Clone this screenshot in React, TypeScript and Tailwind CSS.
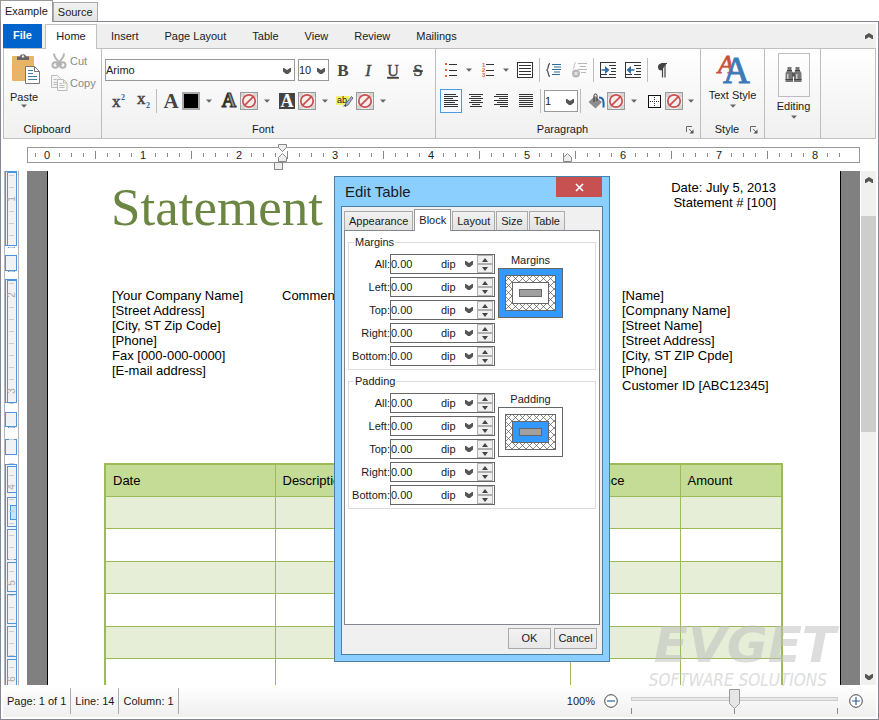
import React from "react";

const SANS = "font-['Liberation_Sans',Arial,sans-serif]";
const SERIF = "'Liberation Serif', 'Times New Roman', serif";

function Caret({ w = "w-[18px]" }: { w?: string }) {
  return (
    <button aria-label="More" className={`${w} flex h-[22px] shrink-0 items-center justify-center`}>
      <svg width="6" height="4" viewBox="0 0 6 4"><path d="M0 0.5h6L3 3.7z" fill="#666" /></svg>
    </button>
  );
}

function Chevron({ up = false, className = "" }: { up?: boolean; className?: string }) {
  return (
    <svg width="10" height="6" viewBox="0 0 10 6" className={className}>
      {up ? (
        <path d="M5 0L9 2.500V6H8L5 4 2 6H1V2.500z" fill="#555" />
      ) : (
        <path d="M1 0h1l3 2 3-2h1v3.500L6 6H4L1 3.500z" fill="#555" />
      )}
    </svg>
  );
}

function Tool({ label, w = "w-[25px]", children }: { label: string; w?: string; children: React.ReactNode }) {
  return (
    <button aria-label={label} className={`${w} flex h-6 shrink-0 items-center justify-center`}>
      {children}
    </button>
  );
}

function Sep() {
  return <div className="ml-[2px] mr-px h-6 w-px shrink-0 bg-[#bdbdbd]" />;
}

function Picker({ label, value, w }: { label: string; value: string; w: string }) {
  return (
    <div className={`${w} relative h-[22px] shrink-0 border border-[#999] bg-white`}>
      <select aria-label={label} defaultValue={value} className="h-full w-full appearance-none bg-transparent text-[11px] text-[#222] outline-none">
        <option>{value}</option>
      </select>
      <Chevron className="pointer-events-none absolute right-[2px] top-[8px]" />
    </div>
  );
}

function NoColor({ label }: { label: string }) {
  return (
    <button aria-label={label} className="flex size-[18px] shrink-0 items-center justify-center border border-[#9a9a9a] bg-[#eeeeee]">
      <svg width="16" height="16" viewBox="0 0 16 16">
        <path d="M0 0h4v4H0zM12 0h4v4h-4zM0 12h4v4H0zM12 12h4v4h-4z" fill="#d6d6d6" />
        <circle cx="8" cy="8" r="6.2" fill="#f8eeee" stroke="#c9504e" strokeWidth="1.7" />
        <path d="M3.8 12.2l8.4-8.4" stroke="#c9504e" strokeWidth="1.7" />
      </svg>
    </button>
  );
}

function Glyph({ children, size = 17, ...rest }: { children: React.ReactNode; size?: number } & React.SVGProps<SVGTextElement>) {
  return (
    <svg width="22" height="24" viewBox="0 0 22 24" className="overflow-visible">
      <text x="11" y="18" textAnchor="middle" fontFamily={SERIF} fontSize={size} fill="#444" {...rest}>{children}</text>
    </svg>
  );
}

function Lines({ rows }: { rows: number[][] }) {
  return (
    <svg width="16" height="16" viewBox="0 0 16 16">
      {rows.map(([x, w], i) => <rect key={i} x={x} y={1 + i * 2} width={w} height="1" fill="#333" />)}
    </svg>
  );
}

function Indent({ out = false }: { out?: boolean }) {
  return (
    <svg width="16" height="16" viewBox="0 0 16 16">
      <path d="M0 .5h16M0 15.5h16M9 3.5h7M11 6.5h5M11 9.5h5M9 12.5h7M0 12.5h7M0.500 .5v15" stroke="#333" />
      {out ? (
        <path d="M9.5 7.2H6V4L1.5 8 6 12V8.8h3.5z" fill="#2e6aa8" />
      ) : (
        <path d="M1.5 7.2H5V4l4.5 4L5 12V8.8H1.5z" fill="#2e6aa8" />
      )}
    </svg>
  );
}

function Launcher() {
  return (
    <button aria-label="Open settings" className="absolute bottom-[4px] right-[6px]">
      <svg width="8" height="8" viewBox="0 0 8 8">
        <path d="M.5 6V.5H6M3 3l3.5 3.5" stroke="#666" fill="none" />
        <path d="M7.5 3.5v4h-4z" fill="#555" />
      </svg>
    </button>
  );
}

function GroupLabel({ children }: { children: React.ReactNode }) {
  return <div className="absolute inset-x-0 bottom-[2px] pr-[11px] text-center leading-[13px]">{children}</div>;
}

function Ribbon() {
  return (
    <div className="relative flex h-[91px] shrink-0 border border-[#c0c0c0] bg-gradient-to-b from-white to-[#f0f0f0]">
      <section className="relative w-[98px] shrink-0 border-r border-[#bdbdbd]">
        <div className="flex">
          <button className="flex w-[40px] flex-col items-center pt-[4px]">
            <svg width="30" height="32" viewBox="0 0 30 32" className="ml-1">
              <rect x="1" y="3" width="22" height="25" rx="1" fill="#e8b468" />
              <path d="M6 7V3.5h3C9 .5 15 .5 15 3.5h3V7z" fill="#666" />
              <circle cx="12" cy="3.4" r="1.2" fill="#eee" />
              <path d="M14.5 13.5h9l5 5v12h-14z" fill="#fff" stroke="#777" />
              <path d="M23.5 13.5v5h5" fill="none" stroke="#777" />
              <path d="M17 17.5h5M17 20.5h5M17 23.5h9M17 26.5h9" stroke="#3f7f9f" />
            </svg>
            <span className="mt-[5px] leading-[14px] text-[#222]">Paste</span>
            <svg width="6" height="4" viewBox="0 0 6 4"><path d="M0 0.5h6L3 3.7z" fill="#666" /></svg>
          </button>
          <div className="flex flex-col pt-[1px] pl-[7px] text-[#8a8a8a]">
            <button className="flex h-[22px] items-center gap-[2px]">
              <svg width="17" height="16" viewBox="0 0 17 16">
                <path d="M3 .5C3 4 5 7 11 12M13 .5C13 4 11 7 5 12" fill="none" stroke="#b4b4b4" strokeWidth="2" />
                <circle cx="4.3" cy="12" r="2.8" fill="none" stroke="#b4b4b4" strokeWidth="2" />
                <circle cx="11.7" cy="12" r="2.8" fill="none" stroke="#b4b4b4" strokeWidth="2" />
              </svg>
              Cut
            </button>
            <button className="flex h-[22px] items-center gap-[2px]">
              <svg width="17" height="16" viewBox="0 0 17 16">
                <path d="M.5.5h6l3 3v9h-9z" fill="#f4f4f4" stroke="#bbb" />
                <path d="M2.500 4.500h3M2.500 7.500h4M2.500 9.500h4" stroke="#bbb" />
                <path d="M6.500 4.500h6l3.500 3.500v7.500h-9.500z" fill="#f8f8f8" stroke="#bbb" />
                <path d="M12.500 4.500v3.500h3.500M8.500 8.500h3M8.500 10.500h5M8.500 12.500h5" fill="none" stroke="#bbb" />
              </svg>
              Copy
            </button>
          </div>
        </div>
        <GroupLabel>Clipboard</GroupLabel>
      </section>

      <section className="relative w-[334px] shrink-0 border-r border-[#bdbdbd] pl-[3px] pt-[9px]">
        <div className="flex h-[24px] items-center">
          <Picker label="Font family" value="Arimo" w="w-[190px]" />
          <div className="w-[3px]" />
          <Picker label="Font size" value="10" w="w-[31px]" />
          <div className="flex pl-px">
            <Tool label="Bold"><Glyph fontWeight="bold">B</Glyph></Tool>
            <Tool label="Italic"><Glyph fontStyle="italic" stroke="#444" strokeWidth=".4">I</Glyph></Tool>
            <Tool label="Underline"><Glyph size={16} stroke="#444" strokeWidth=".4" textDecoration="underline">U</Glyph></Tool>
            <Tool label="Strikethrough"><Glyph textDecoration="line-through" stroke="#444" strokeWidth=".4">S</Glyph></Tool>
          </div>
        </div>
        <div className="mt-[7px] flex h-[24px] items-center">
          <Tool label="Superscript">
            <svg width="22" height="22" viewBox="0 0 22 22">
              <text x="5" y="17" fontFamily={SERIF} fontSize="17" fill="#444" stroke="#444" strokeWidth=".5">x</text>
              <text x="14" y="10" fontFamily={SERIF} fontSize="8" fontWeight="bold" fill="#1f63ac">2</text>
            </svg>
          </Tool>
          <Tool label="Subscript">
            <svg width="22" height="22" viewBox="0 0 22 22">
              <text x="5" y="14" fontFamily={SERIF} fontSize="17" fill="#444" stroke="#444" strokeWidth=".5">x</text>
              <text x="14" y="18" fontFamily={SERIF} fontSize="8" fontWeight="bold" fill="#1f63ac">2</text>
            </svg>
          </Tool>
          <div className="ml-px mr-[3px] h-6 w-px bg-[#bdbdbd]" />
          <Tool label="Text colour" w="w-[22px]"><Glyph size={21} fontWeight="bold" y="19">A</Glyph></Tool>
          <button aria-label="Black" className="size-[18px] shrink-0 border-2 border-[#aaa] bg-black" />
          <Caret />
          <Tool label="Outline colour" w="w-[22px]">
            <Glyph size={20} fontWeight="bold" y="18" style={{ fill: "#999" }} stroke="#333" strokeWidth="1.2">A</Glyph>
          </Tool>
          <NoColor label="No outline" />
          <Caret />
          <Tool label="Text background" w="w-[22px]">
            <svg width="16" height="16" viewBox="0 0 16 16" className="overflow-visible">
              <rect width="16" height="16" fill="#444" />
              <text x="8" y="14" textAnchor="middle" fontFamily={SERIF} fontSize="18" fontWeight="bold" fill="#fff">A</text>
            </svg>
          </Tool>
          <NoColor label="No text background" />
          <Caret />
          <Tool label="Highlight" w="w-[22px]">
            <svg width="18" height="14" viewBox="0 0 18 14">
              <rect x="0" y="2" width="13" height="9" fill="#f2f06a" />
              <text x="1" y="9" fontFamily="Liberation Sans, sans-serif" fontSize="9" fill="#222">ab</text>
              <path d="M15.500 2.500l1.500 1.500-5 7-3 1.500.8-3z" fill="#9bbbe0" stroke="#456" strokeWidth=".8" />
              <path d="M6.500 12.500l3-2 1 1z" fill="#333" />
            </svg>
          </Tool>
          <NoColor label="No highlight" />
          <Caret />
        </div>
        <GroupLabel>Font</GroupLabel>
      </section>

      <section className="relative w-[265px] shrink-0 border-r border-[#bdbdbd] pl-[2px] pt-[9px]">
        <div className="flex h-[24px] items-center">
          <Tool label="Bullets">
            <svg width="14" height="14" viewBox="0 0 14 14">
              <path d="M1 0h2v2H1zM1 6h2v2H1zM1 12h2v2H1z" fill="#d9683c" />
              <path d="M5 1.500h8M5 7.500h8M5 12.500h8" stroke="#333" />
            </svg>
          </Tool>
          <Caret w="w-[12px]" />
          <Tool label="Numbering">
            <svg width="14" height="16" viewBox="0 0 14 16">
              {["1", "2", "3"].map((n, i) => (
                <text key={n} x="1" y={5 + i * 5} fontFamily="Liberation Sans, sans-serif" fontSize="6" fontWeight="bold" fill="#d9683c">{n}</text>
              ))}
              <path d="M5 2.500h8M5 8.500h8M5 13.500h8" stroke="#333" />
            </svg>
          </Tool>
          <Caret w="w-[12px]" />
          <Tool label="Paragraph">
            <svg width="16" height="16" viewBox="0 0 16 16">
              <rect x=".5" y=".5" width="15" height="15" fill="#fff" stroke="#333" />
              <path d="M2 3.500h12M2 6.500h12M2 9.500h12M2 12.500h12" stroke="#333" />
            </svg>
          </Tool>
          <Sep />
          <Tool label="Add style">
            <svg width="15" height="14" viewBox="0 0 15 14">
              <path d="M4 .5C1.500.5 3 6 .8 7 3 8 1.500 13.500 4 13.500" fill="none" stroke="#555" strokeWidth="1.300" />
              <path d="M6 1.500h9M6 6.500h9M6 11.500h8M8 4h7M8 9h6" stroke="#2e6a9a" />
            </svg>
          </Tool>
          <Tool label="Remove style">
            <svg width="16" height="16" viewBox="0 0 16 16">
              <path d="M5 .5C2.500.5 4 6 1.800 7M7 1.500h9M9 4.500h6M7 7.500h9M10 10.500h5" fill="none" stroke="#b8b8b8" />
              <circle cx="5" cy="11.500" r="4" fill="#b8b8b8" />
              <path d="M3.500 10l3 3M6.500 10l-3 3" stroke="#fff" />
            </svg>
          </Tool>
          <Sep />
          <Tool label="Increase indent"><Indent /></Tool>
          <Tool label="Decrease indent"><Indent out /></Tool>
          <Sep />
          <Tool label="Formatting marks">
            <svg width="10" height="15" viewBox="0 0 10 15">
              <path d="M9.500.5H4.500a3.500 3.500 0 000 7" fill="#444" />
              <path d="M4 .5h6M5.500.5v14M8 .5v14" stroke="#444" strokeWidth="1.200" />
            </svg>
          </Tool>
        </div>
        <div className="mt-[7px] flex h-[24px] items-center">
          <button aria-label="Align left" className="ml-[2px] mr-px flex h-6 w-[22px] items-center justify-center border border-[#4a9be0] bg-[#f4faff]">
            <Lines rows={[[1, 12], [1, 14], [1, 9], [1, 14], [1, 11], [1, 14], [1, 14]]} />
          </button>
          <Tool label="Align centre"><Lines rows={[[1, 14], [3, 10], [1, 14], [3, 10], [1, 14], [4, 8], [2, 12]]} /></Tool>
          <Tool label="Align right"><Lines rows={[[3, 12], [1, 14], [6, 9], [1, 14], [4, 11], [1, 14], [7, 8]]} /></Tool>
          <Tool label="Justify"><Lines rows={[[1, 14], [1, 14], [1, 14], [1, 14], [1, 14], [1, 14], [1, 14]]} /></Tool>
          <Sep />
          <div className="w-[2px] shrink-0" />
          <Picker label="Line spacing" value="1" w="w-[34px]" />
          <Sep />
          <Tool label="Fill">
            <svg width="17" height="17" viewBox="0 0 17 17" className="ml-[4px]">
              <path d="M7 3l7 6-6.500 6.500L.5 9z" fill="#8c8c8c" />
              <path d="M6 9V2.500a1.500 1.500 0 013 0V8" fill="none" stroke="#333" />
              <path d="M11 4.500c4 0 5 2 4.500 10" fill="none" stroke="#1f63ac" strokeWidth="2" />
            </svg>
          </Tool>
          <NoColor label="No fill" />
          <Caret />
          <Tool label="Borders" w="w-[22px]">
            <svg width="13" height="13" viewBox="0 0 13 13">
              <rect x=".5" y=".5" width="12" height="12" fill="#fff" stroke="#111" />
              <path d="M6.500 2v10M2 6.500h10" stroke="#333" strokeDasharray="1 1" />
            </svg>
          </Tool>
          <NoColor label="No border" />
          <Caret w="w-[16px]" />
        </div>
        <GroupLabel>Paragraph</GroupLabel>
        <Launcher />
      </section>

      <section className="relative w-[64px] shrink-0 border-r border-[#bdbdbd]">
        <button className="flex w-full flex-col items-center pt-[4px]">
          <svg width="32" height="32" viewBox="0 0 32 32" className="overflow-visible">
            <text x="1" y="20" fontFamily={SERIF} fontSize="26" fontStyle="italic" fill="#c9503c" stroke="#c9503c" strokeWidth=".8">A</text>
            <text x="6" y="30" fontFamily={SERIF} fontSize="37" fill="#3d7ab8" stroke="#3d7ab8" strokeWidth="1">A</text>
          </svg>
          <span className="mt-[3px] whitespace-nowrap leading-[14px]">Text Style</span>
          <svg width="6" height="4" viewBox="0 0 6 4" className="mt-[2px]"><path d="M0 0.5h6L3 3.7z" fill="#666" /></svg>
        </button>
        <GroupLabel>Style</GroupLabel>
        <Launcher />
      </section>

      <section className="w-[56px] shrink-0 border-r border-[#bdbdbd] pl-[2px]">
        <button className="flex w-full flex-col items-center pt-[4px]">
          <span className="flex h-[44px] w-[32px] items-center justify-center border border-[#bdbdbd]">
            <svg width="17" height="16" viewBox="0 0 17 16">
              <path d="M2.500 0h4v3L8 6v9H.5V6L2.500 3zM10.500 0h4v3l2 3v9H9V6l1.500-3z" fill="#777" />
              <path d="M7 5.500h3v4H7z" fill="#555" />
              <path d="M2 7h1.500v6H2zM11 7h1.500v6H11z" fill="#ccc" />
              <path d="M.5 12.500H8M9 12.500h7.500M2 3.500h5M10 3.500h5" stroke="#444" />
            </svg>
          </span>
          <span className="mt-[2px] leading-[14px]">Editing</span>
          <svg width="6" height="4" viewBox="0 0 6 4" className="mt-[2px]"><path d="M0 0.5h6L3 3.7z" fill="#666" /></svg>
        </button>
      </section>
    </div>
  );
}

function HorizontalRuler() {
  const ticks = Array.from({ length: 68 }, (_, i) => i - 1).filter((i) => i % 8 !== 0);
  return (
    <div className="relative ml-6 mr-4 mt-[8px] h-[24px] shrink-0">
      <div className="h-[16px] border border-[#999]" />
      <svg className="absolute left-0 top-[-4px] h-[28px] w-full" aria-label="Ruler">
        {ticks.map((i) => (
          <path key={i} d={i % 4 === 0 ? `M${20.5 + i * 12} 8v8` : `M${20.5 + i * 12} 10v4`} stroke="#888" />
        ))}
        {Array.from({ length: 9 }, (_, n) => (
          <text key={n} x={20 + n * 96} y="16" textAnchor="middle" fontSize="11" fill="#222">{n}</text>
        ))}
        <g fill="#eee" stroke="#888">
          <path d="M251.500 1.500h8v3l-4 4-4-4z" />
          <path d="M255.500 10.500l4 4v4h-8v-4z" />
          <rect x="247.500" y="19.500" width="8" height="7" />
          <path d="M540.500 10.500l4 4v4h-8v-4z" />
        </g>
      </svg>
    </div>
  );
}

const rulerBoxes = [
  [2, 0, 75], [4, 1, 74], [2, 84, 16], [2, 108, 124], [4, 109, 123], [2, 241, 15], [2, 268, 16],
  [2, 293, 230], [4, 295, 27], [4, 326, 30], [4, 358, 31], [4, 391, 30], [4, 423, 30], [4, 455, 31], [4, 488, 30],
];

function VerticalRuler() {
  return (
    <svg className="h-full w-6 shrink-0" aria-label="Vertical ruler">
      <path d="M1.500 0v520M15.500 0v520" stroke="#b9b4bb" />
      <g fill="#f2f2f2" stroke="#4a97de">
        {rulerBoxes.map(([x, y, h], i) => <rect key={i} x={x + 0.5} y={y + 0.5} width={13 - x} height={h - 1} />)}
        <rect x="7.500" y="334.500" width="6" height="14" fill="#c5e3fb" />
        <path d="M5 76.500h7M5 100.500h7M5 256.500h7" />
      </g>
      {Array.from({ length: 42 }, (_, i) => i)
        .filter((i) => i % 8 !== 2 && i !== 7 && i !== 20 && i !== 23)
        .map((i) => <path key={i} d={`M6 ${4.5 + i * 12}h5`} stroke="#ccc" />)}
      {[1, 2, 3, 4, 5, 6].map((n) => (
        <text key={n} transform={`translate(12 ${28 + (n - 1) * 96}) rotate(-90)`} textAnchor="middle" fontSize="10" fill="#aaa">{n}</text>
      ))}
    </svg>
  );
}

function DocumentPage() {
  const cell = "border border-[#9bbb59] px-[7px]";
  return (
    <article className="min-w-0 flex-1 overflow-hidden border-x border-black bg-white pl-14 pr-[57px] text-[13px] leading-[15px] text-black">
      <div className="flex justify-between px-[7px]">
        <h1 className="mt-[6px] font-['Liberation_Serif',serif] text-[53px] leading-[60px] text-[#6a8642]">Statement</h1>
        <div className="mt-[9px] text-right">
          <p>Date: July 5, 2013</p>
          <p>Statement # [100]</p>
        </div>
      </div>
      <div className="mt-[51px] grid h-[175px] grid-cols-[170px_340px_1fr] pl-2">
        <address className="whitespace-pre-line not-italic">
          {"[Your Company Name]\n[Street Address]\n[City, ST Zip Code]\n[Phone]\nFax [000-000-0000]\n[E-mail address]"}
        </address>
        <p>Comments</p>
        <address className="whitespace-pre-line not-italic">
          {"[Name]\n[Compnany Name]\n[Street Name]\n[Street Address]\n[City, ST ZIP Cpde]\n[Phone]\nCustomer ID [ABC12345]"}
        </address>
      </div>
      <table className="w-full table-fixed border-collapse border-2 border-[#9bbb59]">
        <colgroup>
          <col className="w-[170px]" />
          <col />
          <col className="w-[110px]" />
          <col className="w-[102px]" />
        </colgroup>
        <thead>
          <tr className="h-[32px] bg-[#c4dc96] text-left">
            {["Date", "Description", "Balance", "Amount"].map((h) => <th key={h} className={`${cell} font-normal`}>{h}</th>)}
          </tr>
        </thead>
        <tbody>
          {[0, 1, 2, 3, 4, 5].map((r) => (
            <tr key={r} className={r % 2 === 0 ? "h-[32px] bg-[#e6eed7]" : "h-[33px]"}>
              {[0, 1, 2, 3].map((c) => <td key={c} className={cell} />)}
            </tr>
          ))}
        </tbody>
      </table>
    </article>
  );
}

function BoxDiagram({ id, title, margins }: { id: string; title: string; margins: boolean }) {
  return (
    <figure className="flex w-[65px] flex-col">
      <figcaption className="-mt-px mb-px text-center leading-[14px]">{title}</figcaption>
      <svg width="65" height="50" viewBox="0 0 65 50">
        <defs>
          <pattern id={id} x="7" y="7" width="7" height="7" patternUnits="userSpaceOnUse">
            <path d="M-1-1l9 9M8-1L-1 8" stroke="#555" strokeWidth=".7" />
          </pattern>
        </defs>
        <g stroke="#666">
          <rect x=".5" y=".5" width="64" height="49" fill={margins ? "#3399ff" : "#fff"} />
          <rect x="7.500" y="7.500" width="50" height="35" fill="#fff" />
          <rect x="7.500" y="7.500" width="50" height="35" fill={`url(#${id})`} />
          <rect x="14.500" y="14.500" width="36" height="21" fill={margins ? "#fff" : "#3399ff"} />
          <rect x="21.500" y="21.500" width="22" height="7" fill="#a0a0a0" />
        </g>
      </svg>
    </figure>
  );
}

function Spacing({ title }: { title: string }) {
  return (
    <fieldset className="border border-[#dcdcdc] pb-[3px]">
      <legend className="ml-[5px] px-px leading-[12px]">{title}</legend>
      <div className="flex gap-[3px] pt-[6px]">
        <div className="flex flex-col gap-[3px]">
          {["All", "Left", "Top", "Right", "Bottom"].map((side) => {
            const id = `${title}-${side}`;
            return (
              <div key={side} className="flex h-[20px] items-center">
                <label htmlFor={id} className="w-[41px] text-right">{side}:</label>
                <div className="flex h-[20px] w-[105px] items-center border border-[#666] bg-white">
                  <input id={id} defaultValue="0.00" className="h-[18px] w-[50px] bg-transparent text-[11px] outline-none" />
                  <div className="relative w-[36px]">
                    <select aria-label={`${side} unit`} defaultValue="dip" className="h-[18px] w-full appearance-none bg-transparent outline-none">
                      <option>dip</option>
                    </select>
                    <Chevron className="pointer-events-none absolute right-[3px] top-[6px]" />
                  </div>
                  <div className="flex w-[16px] flex-col">
                    <button aria-label={`Increase ${side}`} className="flex h-[9px] items-center justify-center border border-[#b0b0b0] bg-[#f0f0f0]">
                      <svg width="6" height="4" viewBox="0 0 6 4"><path d="M0 4h6L3 0z" fill="#444" /></svg>
                    </button>
                    <button aria-label={`Decrease ${side}`} className="flex h-[9px] items-center justify-center border border-[#b0b0b0] bg-[#f0f0f0]">
                      <svg width="6" height="4" viewBox="0 0 6 4"><path d="M0 0h6L3 4z" fill="#444" /></svg>
                    </button>
                  </div>
                </div>
              </div>
            );
          })}
        </div>
        <BoxDiagram id={`hatch-${title}`} title={title} margins={title === "Margins"} />
      </div>
    </fieldset>
  );
}

function EditTableDialog() {
  return (
    <div role="dialog" aria-label="Edit Table" className="absolute left-[334px] top-[176px] flex h-[486px] w-[276px] flex-col border border-[#4a7fa8] bg-[#8bcfff] px-[6px] pb-[6px] text-[#1a1a1a]">
      <div className="flex h-[29px] justify-between pl-[4px] pr-px">
        <h2 className="text-[15px] leading-[30px]">Edit Table</h2>
        <button aria-label="Close" className="flex h-[20px] w-[46px] items-center justify-center bg-[#c75050]">
          <svg width="9" height="9" viewBox="0 0 9 9"><path d="M1 1l7 7M8 1L1 8" stroke="#fff" strokeWidth="1.700" /></svg>
        </button>
      </div>
      <div className="flex flex-1 flex-col border border-[#4a7fa8] bg-[#f0f0f0] px-[2px]">
        <div role="tablist" className="flex h-[23px] items-end gap-px">
          {["Appearance", "Block", "Layout", "Size", "Table"].map((t) =>
            t === "Block" ? (
              <button key={t} role="tab" aria-selected className="relative -mb-px h-[22px] border border-b-0 border-[#999] bg-white px-[4px]">{t}</button>
            ) : (
              <button key={t} role="tab" className="h-[19px] border border-b-0 border-[#aaa] bg-gradient-to-b from-[#f2f2f2] to-[#e2e2e2] px-[4px]">{t}</button>
            ),
          )}
        </div>
        <div className="flex flex-1 flex-col gap-[5px] border border-[#828790] bg-white px-[3px] pt-[5px]">
          <Spacing title="Margins" />
          <Spacing title="Padding" />
        </div>
        <div className="flex h-[29px] justify-end gap-[3px] pr-[3px] pt-[3px]">
          {["OK", "Cancel"].map((b) => (
            <button key={b} className="h-[21px] w-[43px] border border-[#aaa] bg-gradient-to-b from-[#f2f2f2] to-[#e8e8e8]">{b}</button>
          ))}
        </div>
      </div>
    </div>
  );
}

function ZoomIcon({ plus = false }: { plus?: boolean }) {
  return (
    <svg width="14" height="14" viewBox="0 0 14 14">
      <circle cx="7" cy="7" r="6.300" fill="#fff" stroke="#444" />
      <path d={plus ? "M3 7h8M7 3v8" : "M3 7h8"} stroke="#2e5f94" strokeWidth="1.200" />
    </svg>
  );
}

function StatusBar() {
  const part = "flex h-[26px] items-center border-r border-[#aaa] pl-[4px] pr-[4px]";
  return (
    <footer className="flex h-[32px] shrink-0 items-center bg-gradient-to-b from-white to-[#efefef]">
      <span className={part}>Page: 1 of 1</span>
      <span className={part}>Line: 14</span>
      <span className={part}>Column: 1</span>
      <div className="ml-auto flex items-center pr-[13px]">
        <span>100%</span>
        <button aria-label="Zoom out" className="ml-[9px]"><ZoomIcon /></button>
        <div className="relative ml-[13px] mr-[11px] h-[28px] w-[207px]">
          <svg width="207" height="28" viewBox="0 0 207 28">
            <rect x=".5" y="10.500" width="206" height="3" fill="#e8e8e8" stroke="#cdcdcd" />
            <path d="M.5 21v6M103.500 21v6M206.500 21v6" stroke="#888" />
            <path d="M98.500 2.500h10v14l-5 5-5-5z" fill="#e6e6e6" stroke="#999" />
          </svg>
          <input type="range" aria-label="Zoom" className="absolute inset-0 h-full w-full opacity-0" />
        </div>
        <button aria-label="Zoom in"><ZoomIcon plus /></button>
      </div>
    </footer>
  );
}

export default function App() {
  return (
    <div className={`${SANS} relative flex h-screen min-h-[680px] flex-col overflow-hidden bg-white text-[11px] text-[#1a1a1a]`}>
      <div className="flex h-[21px] shrink-0 items-end">
        <button className="relative z-10 -mb-px h-[22px] border border-b-0 border-[#999] bg-white px-[4px]">Example</button>
        <button className="h-[19px] border border-b-0 border-[#aaa] bg-gradient-to-b from-[#f2f2f2] to-[#e4e4e4] px-[4px]">Source</button>
      </div>
      <div className="flex min-h-0 flex-1 flex-col border border-[#828790] p-[2px]">
        <nav className="flex h-[24px] shrink-0 items-end bg-[#efefef]">
          <button className="h-[24px] w-[39px] shrink-0 bg-[#0064cc] pb-[2px] font-bold text-white">File</button>
          <button className="relative z-10 -mb-px ml-[3px] h-[25px] w-[52px] shrink-0 border border-b-0 border-[#c0c0c0] bg-white pb-[2px]">Home</button>
          <div className="flex h-[24px] flex-1 items-center gap-[26px] pl-[14px]">
            {["Insert", "Page Layout", "Table", "View", "Review", "Mailings"].map((t) => (
              <button key={t} className="whitespace-nowrap">{t}</button>
            ))}
          </div>
          <button aria-label="Collapse ribbon" className="flex h-[24px] items-center pr-[2px]"><Chevron up /></button>
        </nav>
        <Ribbon />
        <HorizontalRuler />
        <main className="flex min-h-0 flex-1">
          <VerticalRuler />
          <div className="flex min-w-0 flex-1 bg-[#808080] pl-5 pr-[19px]">
            <DocumentPage />
          </div>
          <div className="ml-px flex w-[15px] flex-col items-center bg-[#f0f0f0]">
            <div className="flex h-[45px] items-start pt-[6px]"><Chevron up /></div>
            <div className="h-[216px] w-full bg-[#cdcdcd]" />
            <div className="mt-auto pb-[5px]"><Chevron /></div>
          </div>
        </main>
        <StatusBar />
      </div>
      <div className="pointer-events-none absolute bottom-[28px] right-[38px] text-center italic text-[#bdbdbd] opacity-50">
        <div className="font-['DejaVu_Sans',sans-serif] text-[50px] font-bold leading-[46px]">EVGET</div>
        <div className="pr-[14px] font-['Liberation_Sans_Narrow','DejaVu_Sans_Condensed',sans-serif] text-[17px] leading-[24px]">SOFTWARE SOLUTIONS</div>
      </div>
      <EditTableDialog />
    </div>
  );
}
